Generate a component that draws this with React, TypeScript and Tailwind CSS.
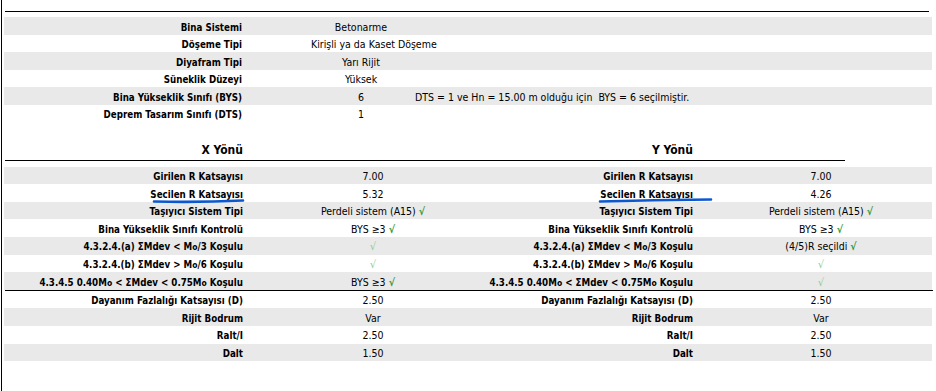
import React from "react";

const font = { fontFamily: '"DejaVu Sans Condensed", "DejaVu Sans", sans-serif', fontStretch: "condensed" as const };

const genel = [
  { label: "Bina Sistemi", value: "Betonarme" },
  { label: "Döşeme Tipi", value: "Kirişli ya da Kaset Döşeme" },
  { label: "Diyafram Tipi", value: "Yarı Rijit" },
  { label: "Süneklik Düzeyi", value: "Yüksek" },
  { label: "Bina Yükseklik Sınıfı (BYS)", value: "6", note: "DTS = 1 ve Hn = 15.00 m olduğu için  BYS = 6 seçilmiştir." },
  { label: "Deprem Tasarım Sınıfı (DTS)", value: "1" },
];

const Mo = () => (
  <>
    M<span className="text-[8.5px]">o</span>
  </>
);

const Check = ({ light }: { light?: boolean }) =>
  light ? (
    <span className="text-[#86c986]">√</span>
  ) : (
    <span className="font-bold text-[#2f9a3a]">√</span>
  );

type Cell = React.ReactNode;

const yonRows: { label: Cell; x: Cell; y: Cell }[] = [
  { label: "Girilen R Katsayısı", x: "7.00", y: "7.00" },
  { label: "Secilen R Katsayısı", x: "5.32", y: "4.26" },
  {
    label: "Taşıyıcı Sistem Tipi",
    x: <>Perdeli sistem (A15) <Check /></>,
    y: <>Perdeli sistem (A15) <Check /></>,
  },
  {
    label: "Bina Yükseklik Sınıfı Kontrolü",
    x: <>BYS ≥3 <Check /></>,
    y: <>BYS ≥3 <Check /></>,
  },
  {
    label: <>4.3.2.4.(a) ΣMdev &lt; <Mo />/3 Koşulu</>,
    x: <Check light />,
    y: <>(4/5)R seçildi <Check /></>,
  },
  {
    label: <>4.3.2.4.(b) ΣMdev &gt; <Mo />/6 Koşulu</>,
    x: <Check light />,
    y: <Check light />,
  },
  {
    label: <>4.3.4.5 0.40<Mo /> &lt; ΣMdev &lt; 0.75<Mo /> Koşulu</>,
    x: <>BYS ≥3 <Check /></>,
    y: <Check light />,
  },
];

const alt = [
  { label: "Dayanım Fazlalığı Katsayısı (D)", value: "2.50" },
  { label: "Rijit Bodrum", value: "Var" },
  { label: "Ralt/I", value: "2.50" },
  { label: "Dalt", value: "1.50" },
];

function Row({ gray, children }: { gray: boolean; children: React.ReactNode }) {
  return (
    <div className={`flex items-start pt-[3.5px] h-[17.6px] whitespace-nowrap ${gray ? "bg-[#e9e9e9]" : "bg-white"}`}>
      {children}
    </div>
  );
}

const Label = ({ w, children }: { w: string; children: React.ReactNode }) => (
  <div className={`${w} flex justify-end font-bold text-[9.7px]`}>
    <span>{children}</span>
  </div>
);

export default function App() {
  return (
    <div className="w-[936px] h-[391px] bg-white overflow-hidden text-[10.5px] text-black leading-[13px]" style={font}>
      <div className="ml-px h-full border-l border-black pl-[2px] w-[935px]">
        <div className="w-[928px] relative">
          {/* top rule */}
          <div className="ml-px w-[924px] h-[12px] border-b border-black" />

          {/* general info */}
          <div className="pt-[5px]">
            {genel.map((r, i) => (
              <Row key={i} gray={i % 2 === 0}>
                <Label w="w-[238px]">{r.label}</Label>
                <div className="ml-[69px] w-[100px] text-center">{r.value}</div>
                {r.note && <div className="ml-[4px] whitespace-pre">{r.note}</div>}
              </Row>
            ))}
          </div>

          {/* direction headers */}
          <div className="flex items-end h-[37px] pb-[2px] font-bold text-[12px] leading-[15px]">
            <div className="w-[239px] text-right">X Yönü</div>
            <div className="w-[450px] text-right">Y Yönü</div>
          </div>
          <div className="ml-px w-[840px] border-t border-black" />

          <div className="pt-[6px]">
            {yonRows.map((r, i) => (
              <Row key={i} gray={i % 2 === 0}>
                <Label w="w-[239px]">{r.label}</Label>
                <div className="ml-[30px] w-[200px] text-center">{r.x}</div>
                <Label w="w-[220px]">{r.label}</Label>
                <div className="ml-[28px] w-[200px] text-center">{r.y}</div>
              </Row>
            ))}
          </div>

          <div className="ml-px w-[928px] border-t border-black" />

          <div>
            {alt.map((r, i) => (
              <Row key={i} gray={i % 2 === 1}>
                <Label w="w-[239px]">{r.label}</Label>
                <div className="ml-[30px] w-[200px] text-center">{r.value}</div>
                <Label w="w-[220px]">{r.label}</Label>
                <div className="ml-[28px] w-[200px] text-center">{r.value}</div>
              </Row>
            ))}
          </div>

          {/* hand-drawn highlight under "Secilen R Katsayısı" */}
          <svg className="absolute left-0 top-0 pointer-events-none" width="928" height="391">
            <path d="M150 201.5 Q195 202.5 239 200.5" stroke="#0b57d0" strokeWidth="2.6" fill="none" strokeLinecap="round" />
            <path d="M596 201.5 Q650 200 707 199.5" stroke="#0b57d0" strokeWidth="2.6" fill="none" strokeLinecap="round" />
          </svg>
        </div>
      </div>
    </div>
  );
}
